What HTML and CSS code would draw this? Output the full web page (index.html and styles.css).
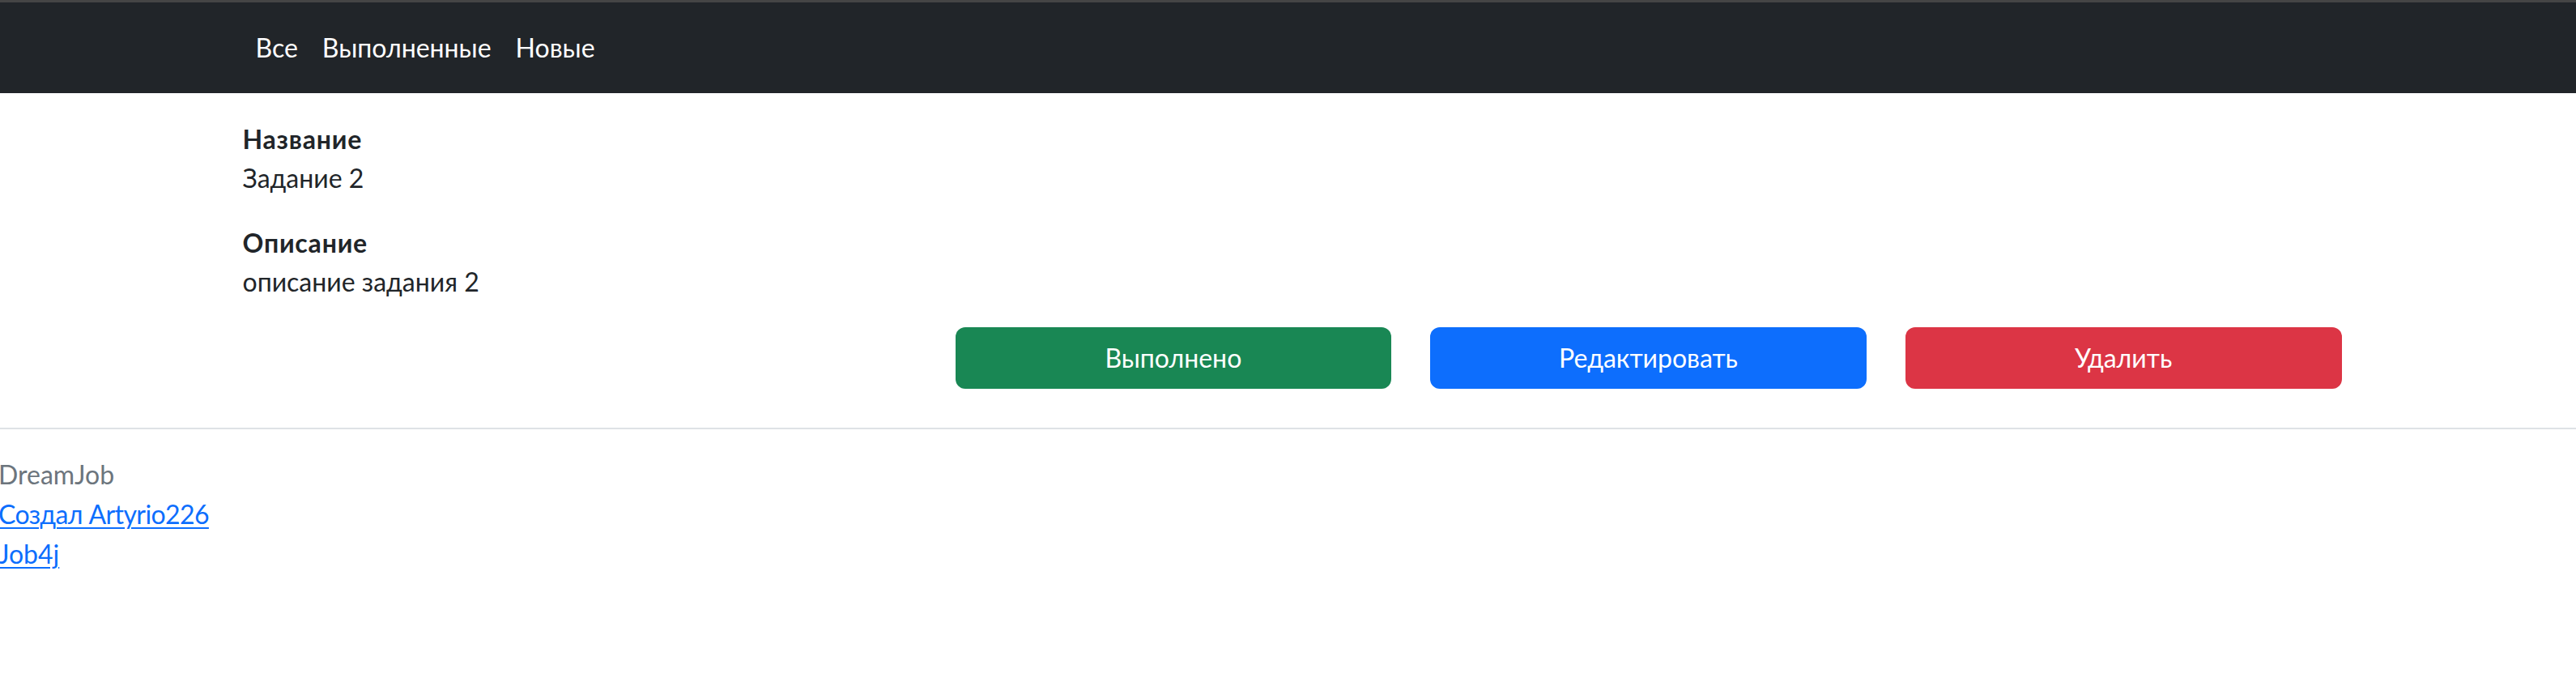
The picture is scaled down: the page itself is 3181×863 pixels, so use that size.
FILE: index.html
```html
<!DOCTYPE html>
<html lang="ru">
<head>
<meta charset="utf-8">
<title>DreamJob</title>
<link rel="stylesheet" href="styles.css">
</head>
<body>
<div class="topstrip"></div>
<nav class="navbar">
  <div class="container nav-inner">
    <a class="nav-link" href="#">Все</a>
    <a class="nav-link" href="#">Выполненные</a>
    <a class="nav-link" href="#">Новые</a>
  </div>
</nav>
<main class="container main">
  <div class="field">
    <div class="label">Название</div>
    <div class="value">Задание 2</div>
  </div>
  <div class="field">
    <div class="label">Описание</div>
    <div class="value">описание задания 2</div>
  </div>
  <div class="actions">
    <button class="btn btn-success">Выполнено</button>
    <button class="btn btn-primary">Редактировать</button>
    <button class="btn btn-danger">Удалить</button>
  </div>
</main>
<footer class="footer">
  <div class="footer-inner">
    <div class="muted">DreamJob</div>
    <div><a class="link link-author" href="#">Создал Artyrio226</a></div>
    <div><a class="link" href="#">Job4j</a></div>
  </div>
</footer>
</body>
</html>
```
FILE: styles.css
```css
* { box-sizing: border-box; }
html, body { margin: 0; padding: 0; }
body {
  font-family: "Lato", "Open Sans", sans-serif;
  font-size: 32px;
  line-height: 48px;
  color: #212529;
  background: #fff;
}
.topstrip { height: 3px; background: #454545; }
.navbar { background: #212529; height: 112px; }
.container {
  width: 2640px;
  margin-left: calc(50% - 1315px);
  padding: 0 24px;
}
.nav-inner {
  display: flex;
  align-items: center;
  height: 112px;
}
.nav-link {
  color: #fff;
  text-decoration: none;
  padding: 0 15px;
}
.nav-link:first-child { padding-left: 16px; }
.main { padding-top: 33px; padding-bottom: 48px; }
.field { margin-bottom: 32px; }
.label { font-weight: 700; letter-spacing: 0.8px; }
.actions {
  display: grid;
  grid-template-columns: repeat(3, 1fr);
  column-gap: 48px;
  margin-left: 880px;
  width: 1712px;
}
.btn {
  height: 76px;
  border: none;
  border-radius: 12px;
  color: #fff;
  font-family: inherit;
  font-size: 32px;
  line-height: 48px;
  padding: 0 24px;
}
.btn-success { background: #198754; }
.btn-primary { background: #0d6efd; }
.btn-danger { background: #dc3545; }
.footer { border-top: 2px solid #dee2e6; padding-top: 31px; }
.footer-inner { margin-left: -2px; line-height: 49px; }
.muted { color: #6c757d; }
.link { color: #0d6efd; text-decoration: underline; text-underline-offset: 4px; text-decoration-thickness: 2px; }
.link-author { letter-spacing: -0.6px; }
```
